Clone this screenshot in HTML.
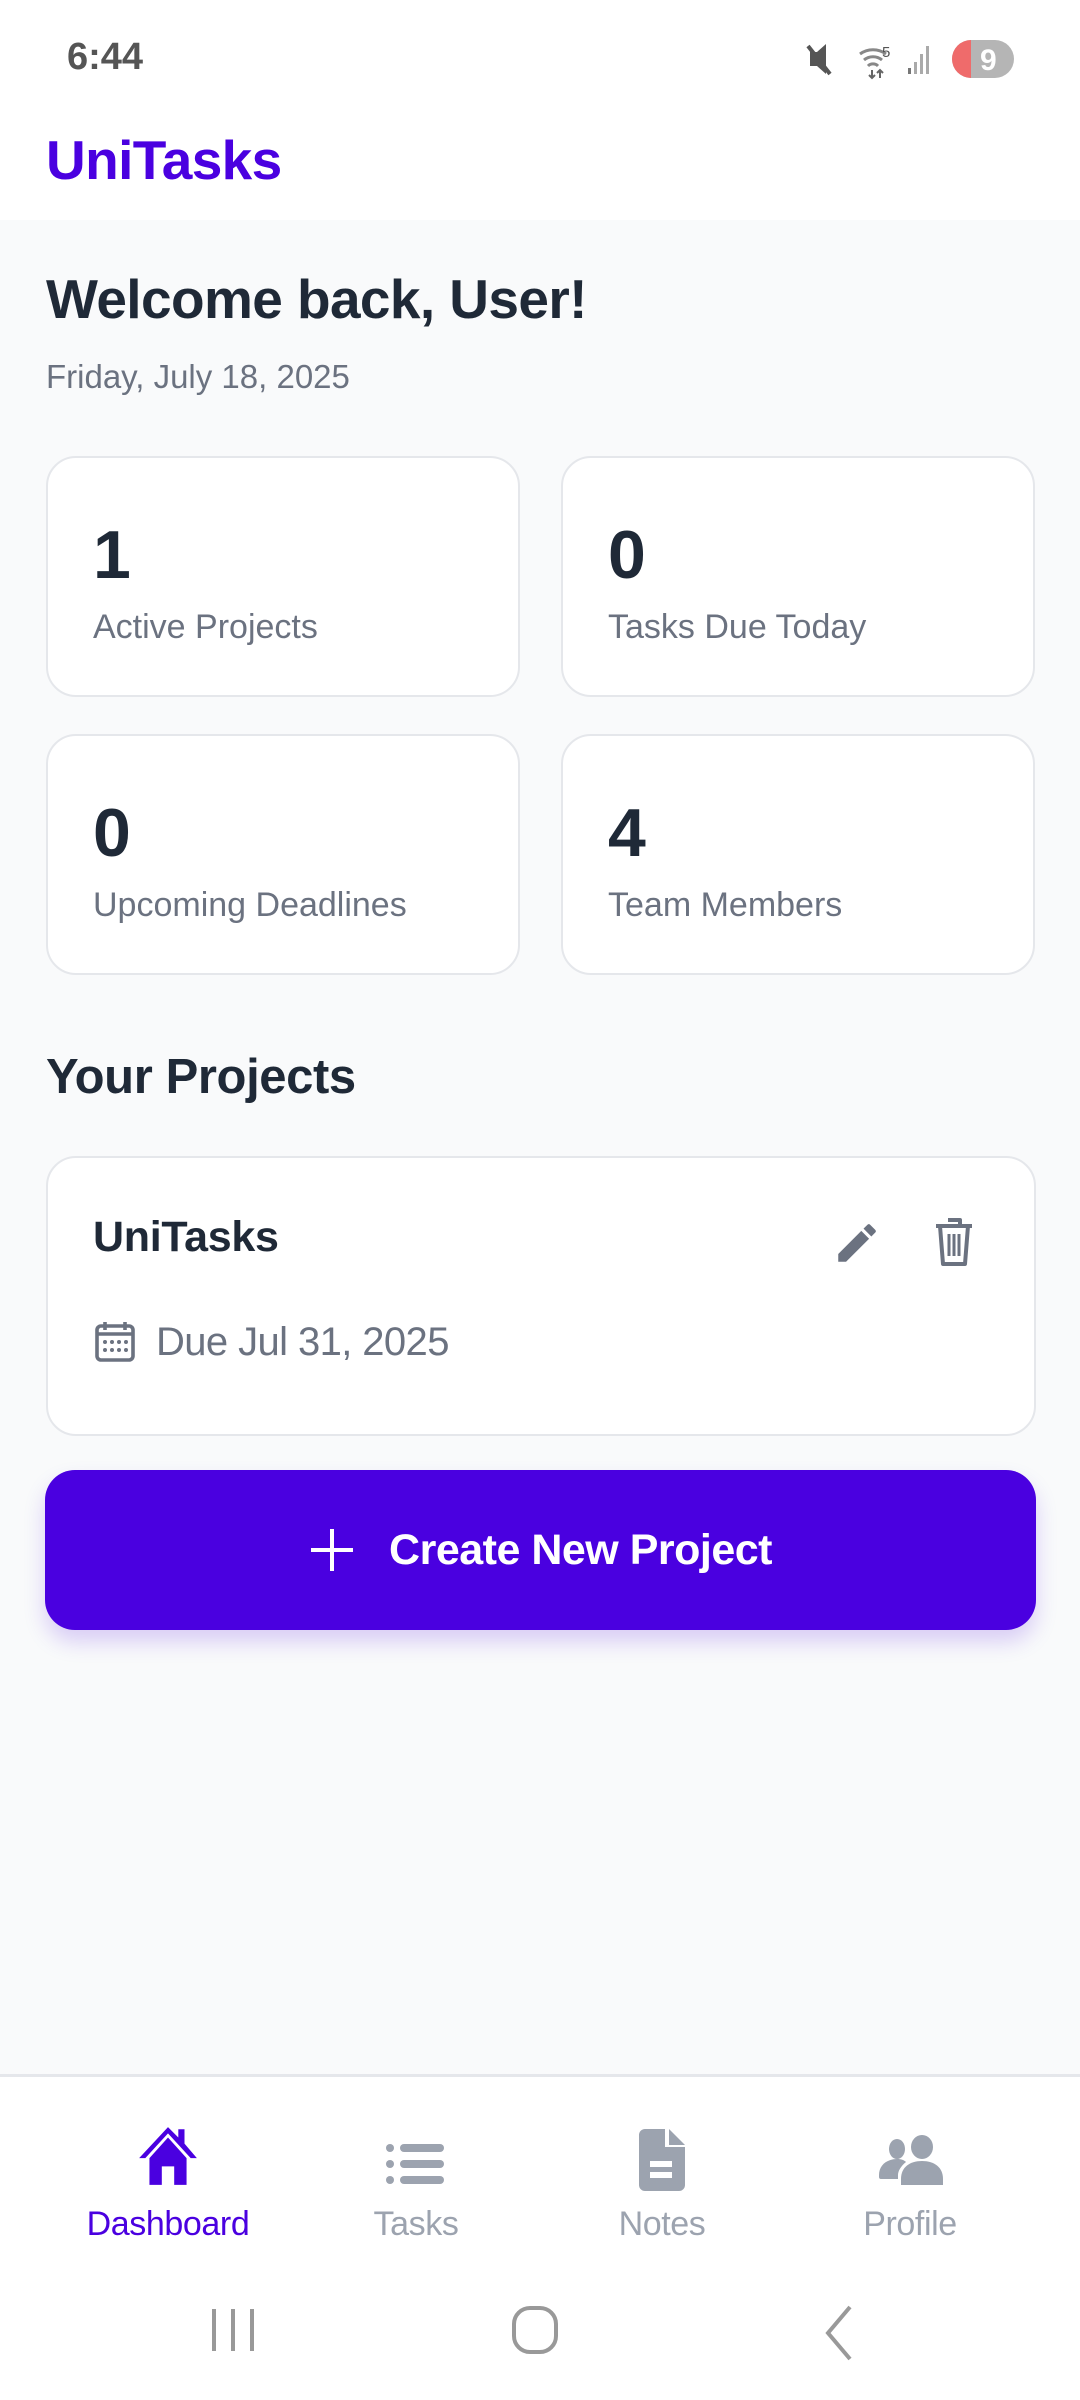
<!DOCTYPE html>
<html><head><meta charset="utf-8"><style>
*{margin:0;padding:0;box-sizing:border-box}
body{width:1080px;height:2400px;background:#f9fafb;font-family:"Liberation Sans",Roboto,sans-serif;position:relative;overflow:hidden;color:#1f2937}
.abs{position:absolute}
.top{left:0;top:0;width:1080px;height:220px;background:#fff}
.time{left:67px;top:36px;font-size:38px;font-weight:bold;color:#555}
.logo{left:46px;top:128px;font-size:55px;font-weight:bold;color:#4a00e0;letter-spacing:-0.6px}
.welcome{left:46px;top:267px;font-size:55px;font-weight:bold;color:#1f2937;letter-spacing:-0.6px}
.date{left:46px;top:358px;font-size:33px;color:#6b7280;letter-spacing:0}
.card{background:#fff;border:2px solid #e5e7eb;border-radius:30px}
.num{position:absolute;left:45px;top:58px;font-size:68px;font-weight:bold;color:#1f2937}
.lbl{position:absolute;left:45px;top:150px;font-size:34px;color:#6b7280;letter-spacing:0}
.yp{left:46px;top:1049px;font-size:49px;font-weight:bold;color:#1f2937;letter-spacing:-0.4px}
.btn{left:45px;top:1470px;width:991px;height:160px;background:#4a00e0;border-radius:30px;box-shadow:0 12px 22px rgba(74,0,224,0.18);color:#fff;font-size:43px;font-weight:bold;display:flex;align-items:center;justify-content:center;letter-spacing:-0.5px}
.nav{left:0;top:2074px;width:1080px;height:326px;background:#fff;border-top:3px solid #e5e7eb}
.nl{position:absolute;top:128px;font-size:34px;width:240px;text-align:center;color:#9ca3af;letter-spacing:-0.4px}
</style></head><body>
<div class="abs top"></div>
<div class="abs time">6:44</div>
<svg class="abs" style="left:800px;top:36px" width="220" height="50" viewBox="0 0 220 50">
<path d="M10 16h7l9-8v30l-9-8h-7z" fill="#555"/><path d="M8 10l22 28" stroke="#555" stroke-width="4"/>
<path d="M60 18a22 22 0 0 1 26 0M64 24a14 14 0 0 1 18 0M68 30a7 7 0 0 1 10 0" stroke="#888" stroke-width="3" fill="none"/>
<path d="M72 34v8M69 39l3 3 3-3M80 42v-8M77 37l3-3 3 3" stroke="#666" stroke-width="2" fill="none"/>
<text x="82" y="21" font-size="15" fill="#555" font-family="Liberation Sans">5</text>
<rect x="108" y="32" width="3" height="6" fill="#777"/><rect x="114" y="26" width="3" height="12" fill="#aaa"/><rect x="120" y="18" width="3" height="20" fill="#aaa"/><rect x="126" y="10" width="3" height="28" fill="#aaa"/>
<rect x="152" y="4" width="62" height="38" rx="19" fill="#b5b5b5"/><path d="M171 4a19 19 0 0 0 0 38z" fill="#ef6b6b"/>
<text x="180" y="34" font-size="30" font-weight="bold" fill="#fff" font-family="Liberation Sans">9</text>
</svg>
<div class="abs logo">UniTasks</div>
<div class="abs welcome">Welcome back, User!</div>
<div class="abs date">Friday, July 18, 2025</div>

<div class="abs card" style="left:46px;top:456px;width:474px;height:241px"><div class="num">1</div><div class="lbl">Active Projects</div></div>
<div class="abs card" style="left:561px;top:456px;width:474px;height:241px"><div class="num">0</div><div class="lbl">Tasks Due Today</div></div>
<div class="abs card" style="left:46px;top:734px;width:474px;height:241px"><div class="num">0</div><div class="lbl">Upcoming Deadlines</div></div>
<div class="abs card" style="left:561px;top:734px;width:474px;height:241px"><div class="num">4</div><div class="lbl">Team Members</div></div>

<div class="abs yp">Your Projects</div>
<div class="abs card" style="left:46px;top:1156px;width:990px;height:280px">
<div style="position:absolute;left:45px;top:55px;font-size:43px;font-weight:bold;color:#1f2937;letter-spacing:-0.3px">UniTasks</div>
<svg style="position:absolute;left:784px;top:60px" width="50" height="50" viewBox="0 0 24 24"><path d="M3 17.25V21h3.75L17.81 9.94l-3.75-3.75L3 17.25zM20.71 7.04a1 1 0 0 0 0-1.41l-2.34-2.34a1 1 0 0 0-1.41 0l-1.83 1.83 3.75 3.75 1.83-1.83z" fill="#6b7280"/></svg>
<svg style="position:absolute;left:884px;top:58px" width="44" height="52" viewBox="0 0 22 26"><path d="M8 2h6v2M2 5h18M4 5l1.5 19h11L18 5" stroke="#6b7280" stroke-width="2" fill="none" stroke-linejoin="round"/><path d="M8.5 9v11M11 9v11M13.5 9v11" stroke="#6b7280" stroke-width="1.5"/></svg>
<svg style="position:absolute;left:47px;top:162px" width="40" height="42" viewBox="0 0 20 21"><rect x="1" y="3" width="18" height="17" rx="2" stroke="#6b7280" stroke-width="1.8" fill="none"/><path d="M1 7h18M5 1v4M15 1v4" stroke="#6b7280" stroke-width="1.8"/><g fill="#6b7280"><circle cx="5" cy="11" r="1"/><circle cx="8.5" cy="11" r="1"/><circle cx="12" cy="11" r="1"/><circle cx="15.5" cy="11" r="1"/><circle cx="5" cy="15" r="1"/><circle cx="8.5" cy="15" r="1"/><circle cx="12" cy="15" r="1"/><circle cx="15.5" cy="15" r="1"/></g></svg>
<div style="position:absolute;left:108px;top:162px;font-size:40px;color:#6b7280;letter-spacing:-0.6px">Due Jul 31, 2025</div>
</div>
<div class="abs btn"><svg width="46" height="46" viewBox="0 0 46 46" style="margin-right:34px"><path d="M23 2v42M2 23h42" stroke="#fff" stroke-width="4"/></svg>Create New Project</div>

<div class="abs nav">
<svg style="position:absolute;left:135px;top:46px" width="66" height="66" viewBox="0 0 32 32"><path d="M16 2L2 17h3l11-12 11 12h3L24 10V3h-3v4z" fill="#4a00e0"/><path d="M16 7L7 17v13h6v-9h6v9h6V17z" fill="#4a00e0"/></svg>
<div class="nl" style="left:48px;color:#4a00e0">Dashboard</div>
<svg style="position:absolute;left:386px;top:66px" width="60" height="42" viewBox="0 0 60 42"><g fill="#9ca3af"><circle cx="4" cy="5" r="4"/><circle cx="4" cy="21" r="4"/><circle cx="4" cy="37" r="4"/><rect x="14" y="1" width="44" height="8" rx="4"/><rect x="14" y="17" width="44" height="8" rx="4"/><rect x="14" y="33" width="44" height="8" rx="4"/></g></svg>
<div class="nl" style="left:296px">Tasks</div>
<svg style="position:absolute;left:639px;top:52px" width="46" height="62" viewBox="0 0 46 62"><path d="M6 0h20v18h20v38a6 6 0 0 1-6 6H6a6 6 0 0 1-6-6V6a6 6 0 0 1 6-6zM30 0l16 16H30z" fill="#9ca3af"/><rect x="11" y="32" width="22" height="6" fill="#fff"/><rect x="11" y="43" width="22" height="6" fill="#fff"/></svg>
<div class="nl" style="left:542px">Notes</div>
<svg style="position:absolute;left:879px;top:58px" width="66" height="52" viewBox="0 0 66 52"><g fill="#9ca3af"><ellipse cx="18" cy="14" rx="8" ry="10"/><ellipse cx="43" cy="12" rx="11" ry="12"/><path d="M0 40c0-10 8-16 18-16 4 0 7 1 9 3-5 4-8 9-8 13v4H2a2 2 0 0 1-2-2z"/><path d="M22 44c0-12 9-18 21-18s21 6 21 18v6H22z"/></g></svg>
<div class="nl" style="left:790px">Profile</div>
<svg style="position:absolute;left:200px;top:218px" width="680" height="70" viewBox="0 0 680 70"><g stroke="#999" stroke-width="4" fill="none"><path d="M14 14v42M33 14v42M52 14v42"/><rect x="314" y="13" width="42" height="44" rx="16"/><path d="M650 12l-22 26 22 26"/></g></svg>
</div>
</body></html>
